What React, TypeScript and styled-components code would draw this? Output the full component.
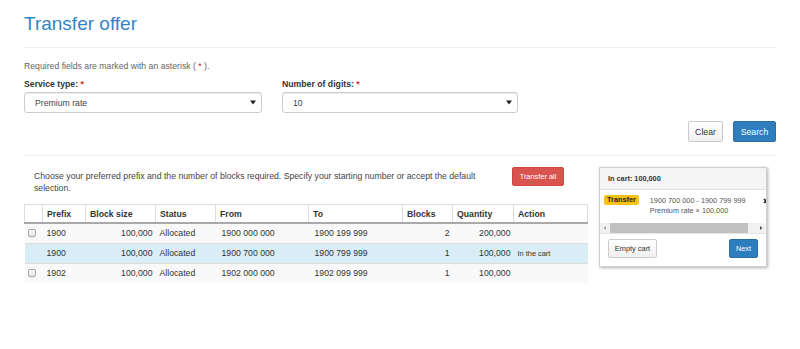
import React from 'react';
import styled, { createGlobalStyle } from 'styled-components';

const GlobalStyle = createGlobalStyle`
  body {
    margin: 0;
    background: #fff;
    font-family: "Liberation Sans", Arial, sans-serif;
    font-size: 8.7px;
    color: #333;
  }
`;

const Page = styled.div`
  padding: 0 24px;
`;

const Title = styled.h1`
  margin: 12px 0 0;
  font-size: 19px;
  line-height: 24px;
  font-weight: 400;
  color: #3384c5;
`;

const Divider = styled.div<{ $top: number }>`
  margin-top: ${(p) => p.$top}px;
  height: 1px;
  background: #eee;
`;

const Note = styled.p`
  margin: 12px 0 0;
  line-height: 12px;
  color: #666;
`;

const Star = styled.span`
  color: #d9231e;
`;

const Fields = styled.div`
  display: grid;
  grid-template-columns: 238px 236px;
  column-gap: 20px;
  margin-top: 6px;
`;

const Label = styled.div`
  font-weight: 700;
  line-height: 12px;
  margin-bottom: 2px;
`;

const Select = styled.div`
  box-sizing: border-box;
  height: 21px;
  border: 1px solid #ccc;
  border-radius: 3px;
  box-shadow: inset 0 1px 1px rgba(0, 0, 0, 0.075);
  display: flex;
  align-items: center;
  justify-content: space-between;
  padding: 0 5px 0 10px;
  color: #444;
`;

const Actions = styled.div`
  display: flex;
  justify-content: flex-end;
  gap: 10px;
  margin-top: 8px;
`;

const Button = styled.button<{ $variant?: 'default' | 'primary' | 'danger'; $h?: number; $fs?: number; $w?: number }>`
  box-sizing: border-box;
  width: ${(p) => (p.$w ? `${p.$w}px` : 'auto')};
  height: ${(p) => p.$h ?? 21}px;
  padding: 0;
  white-space: nowrap;
  font-family: inherit;
  font-size: ${(p) => p.$fs ?? 8.7}px;
  border-radius: 2px;
  cursor: pointer;
  border: 1px solid
    ${(p) => (p.$variant === 'primary' ? '#2a6ea6' : p.$variant === 'danger' ? '#d2443f' : '#ccc')};
  background: ${(p) =>
    p.$variant === 'primary' ? '#2e7dbd' : p.$variant === 'danger' ? '#d9534f' : 'linear-gradient(#fff, #f0f0f0)'};
  color: ${(p) => (p.$variant && p.$variant !== 'default' ? '#fff' : '#333')};
`;

const Main = styled.div`
  display: flex;
  align-items: flex-start;
  gap: 11px;
  margin-top: 11px;
`;

const Left = styled.div`
  flex: 0 0 563px;
`;

const Intro = styled.div`
  display: flex;
  align-items: flex-start;
`;

const IntroText = styled.p`
  flex: 1;
  margin: 0;
  padding: 3px 10px 0;
  line-height: 12px;
  color: #444;
`;

const TransferAll = styled(Button)`
  margin-right: 24px;
`;

const Table = styled.table`
  margin-top: 10px;
  width: 563px;
  border-collapse: collapse;
  table-layout: fixed;
`;

const Th = styled.th<{ $w: number }>`
  box-sizing: border-box;
  width: ${(p) => p.$w}px;
  height: 18px;
  padding: 1px 4px 0;
  text-align: left;
  font-weight: 700;
  border: 1px solid #ddd;
  border-bottom: 2px solid #a9a9a9;
`;

const Row = styled.tr<{ $active?: boolean }>`
  background: ${(p) => (p.$active ? '#d9edf7' : '#f9f9f9')};
`;

const Td = styled.td<{ $right?: boolean; $small?: boolean; $indent?: number }>`
  height: 19px;
  padding: 0 ${(p) => (p.$right ? 3 : 4)}px 0 ${(p) => p.$indent ?? 4}px;
  border-top: 1px solid #ddd;
  text-align: ${(p) => (p.$right ? 'right' : 'left')};
  font-size: ${(p) => (p.$small ? 7.4 : 8.7)}px;
  white-space: nowrap;
  overflow: hidden;
`;

const CheckCell = styled.td`
  height: 19px;
  padding: 0 0 0 3px;
  border-top: 1px solid #ddd;
`;

const Check = styled.span`
  display: block;
  box-sizing: border-box;
  width: 8px;
  height: 8px;
  border: 1px solid #a6a6a6;
  border-radius: 2px;
  background: linear-gradient(#fdfdfd, #e3e3e3);
`;

const Cart = styled.div`
  flex: 0 0 168px;
  box-sizing: border-box;
  border: 1px solid #d0d0d0;
  box-shadow: 1px 1px 3px rgba(0, 0, 0, 0.3);
  font-size: 7.3px;
`;

const CartHeader = styled.div`
  height: 21px;
  line-height: 21px;
  padding: 0 8px;
  background: #f5f5f5;
  border-bottom: 1px solid #e3e3e3;
  font-weight: 700;
`;

const CartBody = styled.div`
  overflow: hidden;
`;

const Item = styled.div`
  display: flex;
  align-items: flex-start;
  padding: 5px 0 0 4px;
  height: 20px;
`;

const Badge = styled.span`
  height: 10px;
  line-height: 10px;
  padding: 0 3px;
  border-radius: 2px;
  background: #f8c316;
  color: #222;
  font-weight: 700;
`;

const ItemText = styled.div`
  margin: 1px 0 0 11px;
  line-height: 10px;
  color: #555;
  white-space: nowrap;
`;

const Close = styled.svg`
  flex: 0 0 auto;
  margin: 3px -3px 0 auto;
`;

const ScrollBar = styled.div`
  margin-top: 8px;
  height: 10px;
  background: #f1f1f1;
  display: flex;
  align-items: center;
`;

const ScrollArrow = styled.svg`
  flex: 0 0 10px;
`;

const Thumb = styled.span`
  flex: 1;
  height: 10px;
  background: #c1c1c1;
  margin-right: 8px;
`;

const CartFooter = styled.div`
  display: flex;
  justify-content: space-between;
  padding: 5px 8px 8px;
  border-top: 1px solid #e5e5e5;
`;

const columns: [string, number][] = [
  ['', 18],
  ['Prefix', 43],
  ['Block size', 70],
  ['Status', 60],
  ['From', 93],
  ['To', 94],
  ['Blocks', 50],
  ['Quantity', 61],
  ['Action', 74],
];

const rows = [
  { prefix: '1900', size: '100,000', from: '1900 000 000', to: '1900 199 999', blocks: 2, qty: '200,000', inCart: false },
  { prefix: '1900', size: '100,000', from: '1900 700 000', to: '1900 799 999', blocks: 1, qty: '100,000', inCart: true },
  { prefix: '1902', size: '100,000', from: '1902 000 000', to: '1902 099 999', blocks: 1, qty: '100,000', inCart: false },
];

const Caret = () => (
  <svg width="6" height="5" viewBox="0 0 6 5">
    <path d="M0 0.5h6L3 4.5z" fill="#222" />
  </svg>
);

const App = () => (
  <Page>
    <GlobalStyle />
    <Title>Transfer offer</Title>
    <Divider $top={11} />
    <Note>
      Required fields are marked with an asterisk ( <Star>*</Star> ).
    </Note>
    <Fields>
      <div>
        <Label>
          Service type: <Star>*</Star>
        </Label>
        <Select>
          Premium rate
          <Caret />
        </Select>
      </div>
      <div>
        <Label>
          Number of digits: <Star>*</Star>
        </Label>
        <Select>
          10
          <Caret />
        </Select>
      </div>
    </Fields>
    <Actions>
      <Button $w={35}>Clear</Button>
      <Button $variant="primary" $w={43}>
        Search
      </Button>
    </Actions>
    <Divider $top={13} />
    <Main>
      <Left>
        <Intro>
          <IntroText>
            Choose your preferred prefix and the number of blocks required. Specify your starting number or accept the
            default selection.
          </IntroText>
          <TransferAll $variant="danger" $h={19} $fs={7.4} $w={52}>
            Transfer all
          </TransferAll>
        </Intro>
        <Table>
          <thead>
            <tr>
              {columns.map(([name, w]) => (
                <Th key={name || 'check'} $w={w}>
                  {name}
                </Th>
              ))}
            </tr>
          </thead>
          <tbody>
            {rows.map((r, i) => (
              <Row key={i} $active={r.inCart}>
                <CheckCell>{!r.inCart && <Check />}</CheckCell>
                <Td>{r.prefix}</Td>
                <Td $right>{r.size}</Td>
                <Td>Allocated</Td>
                <Td $indent={6}>{r.from}</Td>
                <Td $indent={6}>{r.to}</Td>
                <Td $right>{r.blocks}</Td>
                <Td $right>{r.qty}</Td>
                <Td $small>{r.inCart ? 'In the cart' : ''}</Td>
              </Row>
            ))}
          </tbody>
        </Table>
      </Left>
      <Cart>
        <CartHeader>In cart: 100,000</CartHeader>
        <CartBody>
          <Item>
            <Badge>Transfer</Badge>
            <ItemText>
              1900 700 000 - 1900 799 999
              <br />
              Premium rate × 100,000
            </ItemText>
            <Close width="6" height="6" viewBox="0 0 6 6">
              <path d="M1 1l4 4M5 1L1 5" stroke="#222" strokeWidth="1.6" />
            </Close>
          </Item>
          <ScrollBar>
            <ScrollArrow width="10" height="10" viewBox="0 0 10 10">
              <path d="M6 3v4L3.5 5z" fill="#a3a3a3" />
            </ScrollArrow>
            <Thumb />
            <ScrollArrow width="10" height="10" viewBox="0 0 10 10">
              <path d="M4 3v4L6.5 5z" fill="#505050" />
            </ScrollArrow>
          </ScrollBar>
        </CartBody>
        <CartFooter>
          <Button $h={19} $fs={7.4} $w={49}>
            Empty cart
          </Button>
          <Button $variant="primary" $h={19} $fs={7.4} $w={29}>
            Next
          </Button>
        </CartFooter>
      </Cart>
    </Main>
  </Page>
);

export default App;
